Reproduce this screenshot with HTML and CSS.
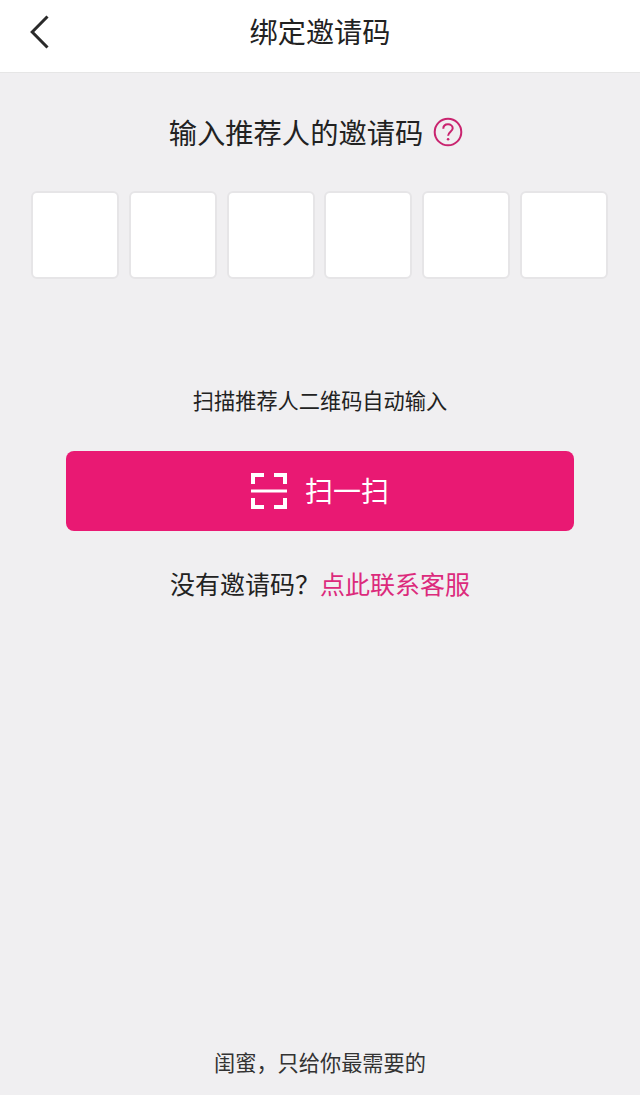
FILE: index.html
```html
<!DOCTYPE html>
<html lang="zh-CN">
<head>
<meta charset="utf-8">
<title>绑定邀请码</title>
<link rel="stylesheet" href="styles.css">
</head>
<body>
<div class="page">
  <header class="nav">
    <svg class="back" viewBox="0 0 20 36" width="20" height="36"><path d="M17.500 1.500 L2.200 17 L17.500 32.500" fill="none" stroke="#2a2a2a" stroke-width="3"/></svg>
    <h1 class="nav-title">绑定邀请码</h1>
  </header>
  <main class="main">
    <div class="heading">
      <span class="heading-text">输入推荐人的邀请码</span>
      <svg class="help" viewBox="0 0 30 30" width="30" height="30"><circle cx="15" cy="15" r="13.300" fill="none" stroke="#c9246f" stroke-width="2"/><path d="M10.300 11.800 C10.300 8.900 12.400 7.300 15 7.300 C17.700 7.300 19.700 9 19.700 11.300 C19.700 14.600 15.100 15 15.100 18.800" fill="none" stroke="#c9246f" stroke-width="2"/><circle cx="15.100" cy="22.300" r="1.300" fill="#c9246f"/></svg>
    </div>
    <div class="codes">
      <div class="code"></div><div class="code"></div><div class="code"></div><div class="code"></div><div class="code"></div><div class="code"></div>
    </div>
    <p class="scan-hint">扫描推荐人二维码自动输入</p>
    <button class="scan-btn" type="button">
      <svg class="scan-icon" viewBox="0 0 36 36" width="36" height="36"><path d="M2 11 V2 H13 M23 2 H34 V11 M2 25 V34 H13 M23 34 H34 V25" fill="none" stroke="#fff" stroke-width="4"/><path d="M0 18 H36" stroke="#fff" stroke-width="3.200"/></svg>
      <span class="scan-label">扫一扫</span>
    </button>
    <p class="contact">没有邀请码？<span class="contact-link">点此联系客服</span></p>
  </main>
  <footer class="slogan">闺蜜，只给你最需要的</footer>
</div>
</body>
</html>
```
FILE: styles.css
```css
* { box-sizing: border-box; }
html, body { margin: 0; padding: 0; }
body {
  width: 640px;
  height: 1095px;
  overflow: hidden;
  background: #f0eff1;
  font-family: "Noto Sans CJK SC", "Liberation Sans", sans-serif;
  color: #222;
}
.page { display: flex; flex-direction: column; height: 1095px; }
.nav {
  position: relative;
  flex: none;
  height: 73px;
  background: #fff;
  border-bottom: 1px solid #e6e6e6;
  display: flex;
  align-items: center;
  justify-content: center;
}
.back { position: absolute; left: 30px; top: 15px; }
.nav-title { margin: 0 0 10px; font-size: 28.200px; font-weight: 400; line-height: 40px; color: #222; }
.main { flex: 1; display: flex; flex-direction: column; align-items: center; }
.heading { margin: 39px 8px 0 0; height: 40px; display: flex; align-items: center; gap: 10px; }
.heading-text { font-size: 28.300px; line-height: 40px; }
.codes { margin: 39px 1px 0 0; display: flex; gap: 9.800px; }
.code {
  width: 88px;
  height: 88px;
  background: #fff;
  border: 2px solid #e6e5e7;
  border-radius: 6px;
}
.scan-hint { margin: 106px 0 0; font-size: 21.200px; line-height: 30px; color: #222; }
.scan-btn {
  margin-top: 36px;
  width: 508px;
  height: 80px;
  border: 0;
  border-radius: 8px;
  background: #e91973;
  display: flex;
  align-items: center;
  justify-content: center;
  gap: 18px;
  font-family: inherit;
  padding: 0;
}
.scan-label { font-size: 28px; line-height: 40px; color: #fff; font-weight: 400; position: relative; top: -1px; }
.contact { margin: 34px 0 0; font-size: 25px; line-height: 36px; color: #222; }
.contact-link { color: #dc2a7c; }
.slogan { flex: none; height: 30px; margin-bottom: 18px; text-align: center; font-size: 21.200px; line-height: 30px; color: #333; }
```
